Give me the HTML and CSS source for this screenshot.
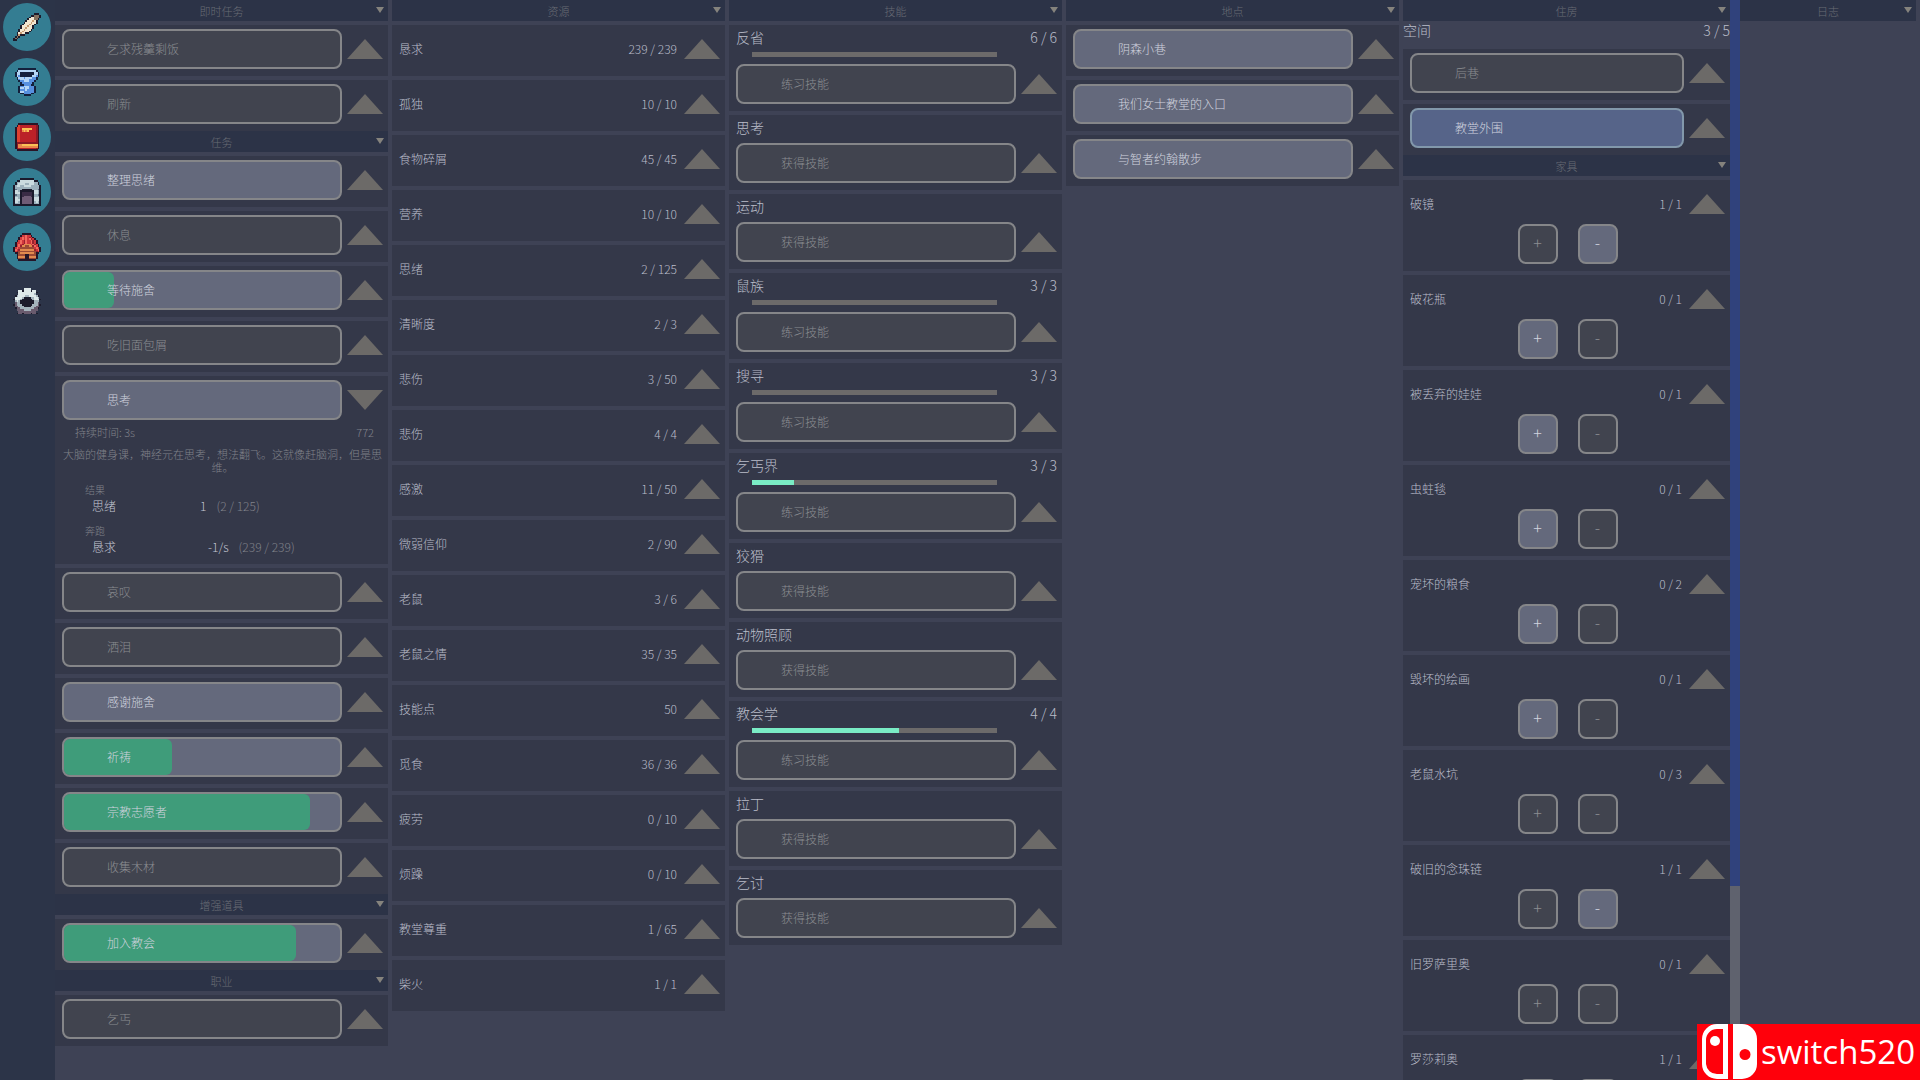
FILE: index.html
```html
<!DOCTYPE html>
<html lang="zh-CN">
<head>
    <meta charset="UTF-8">
    <meta name="viewport" content="width=device-width, initial-scale=1.0">
    <title>任务</title>
    <link rel="stylesheet" href="styles.css">
</head>
<body>
    <nav class="sidebar">
        <button class="nav-btn active" aria-label="任务">
            <svg class="nav-icon" viewBox="0 -0.5 16 16">
                <path stroke="#1d1b2b" d="M12 0h3M10 1h2M15 1h1M9 2h1M15 2h1M8 3h1M14 3h1M7 4h1M13 4h1M6 5h1M13 5h1M5 6h1M12 6h1M4 7h1M11 7h1M4 8h1M11 8h1M3 9h1M10 9h1M3 10h1M9 10h1M2 11h1M7 11h2M2 12h1M4 12h3M1 13h1M3 13h1M0 14h1M2 14h1M0 15h2"/>
                <path stroke="#857260" d="M12 1h3M12 2h3M12 3h2M2 13h1M1 14h1"/>
                <path stroke="#f3e6d0" d="M10 2h2M9 3h3M8 4h3M12 4h1M7 5h3M11 5h2M6 6h3M10 6h2M5 7h3M9 7h2M5 8h2M8 8h3M4 9h2M7 9h3M4 10h1M6 10h3M3 11h1M5 11h2"/>
                <path stroke="#c69a72" d="M11 4h1M10 5h1M9 6h1M8 7h1M7 8h1M6 9h1M5 10h1M4 11h1M3 12h1"/>
            </svg>
        </button>
        <button class="nav-btn active" aria-label="物品">
            <svg class="nav-icon" viewBox="0 -0.5 16 16">
                <path stroke="#14203c" d="M3 0h10M2 1h1M13 1h1M1 2h1M4 2h8M14 2h1M1 3h1M4 3h8M14 3h1M1 4h1M4 4h7M14 4h1M2 5h1M13 5h1M2 6h1M13 6h1M3 7h1M12 7h1M4 8h1M11 8h1M4 9h2M10 9h2M3 10h1M12 10h1M3 11h1M12 11h1M3 12h1M12 12h1M3 13h1M12 13h1M4 14h2M10 14h2M6 15h4"/>
                <path stroke="#b4d5f5" d="M3 1h10M2 2h2M12 2h2M2 3h2M12 3h2M2 4h1M11 4h2M3 5h3M7 5h4M4 6h5M6 7h3M6 10h3M4 11h2M7 11h2M7 12h1M4 13h2"/>
                <path stroke="#5790df" d="M3 4h1M13 4h1M6 5h1M11 5h2M3 6h1M9 6h4M4 7h2M9 7h3M5 8h6M6 9h4M4 10h2M9 10h3M6 11h1M9 11h3M4 12h3M8 12h4M6 13h6M6 14h4"/>
            </svg>
        </button>
        <button class="nav-btn active" aria-label="技能">
            <svg class="nav-icon" viewBox="0 -0.5 16 16">
                <path stroke="#2b1526" d="M3 0h11M2 1h1M14 1h1M1 2h1M14 2h1M1 3h1M14 3h1M1 4h1M14 4h1M1 5h1M14 5h1M1 6h1M14 6h1M1 7h1M14 7h1M1 8h1M14 8h1M1 9h1M14 9h1M1 10h1M14 10h1M1 11h1M14 11h1M1 12h1M14 12h1M1 13h1M14 13h1M1 14h1M14 14h1M2 15h12"/>
                <path stroke="#bb2128" d="M4 1h9M4 2h9M4 3h1M11 3h2M4 4h1M9 4h4M4 5h9M4 6h9M4 7h9M4 8h9M4 9h9M4 10h9M3 14h10"/>
                <path stroke="#8a1a26" d="M13 1h1M13 2h1M13 3h1M13 4h1M13 5h1M13 6h1M13 7h1M13 8h1M13 9h1M13 10h1M3 11h11M2 14h1M2 13h1M2 12h1M2 11h1M13 14h1"/>
                <path stroke="#df4030" d="M3 1h1M2 2h2M2 3h2M2 4h2M2 5h2M2 6h2M2 7h2M2 8h2M2 9h2M2 10h2"/>
                <path stroke="#f9c155" d="M5 3h6M6 4h1M8 4h1M5 12h9"/>
                <path stroke="#e88a4a" d="M5 4h1M7 4h1M3 12h2M3 13h11"/>
            </svg>
        </button>
        <button class="nav-btn active" aria-label="地点">
            <svg class="nav-icon" viewBox="0 -0.5 16 16">
                <path stroke="#1b1a2c" d="M4 0h8M2 1h2M12 1h2M1 2h1M14 2h1M1 3h1M14 3h1M0 4h1M15 4h1M0 5h1M15 5h1M0 6h1M5 6h6M15 6h1M0 7h1M4 7h8M15 7h1M0 8h1M4 8h1M11 8h1M15 8h1M0 9h1M4 9h1M11 9h1M15 9h1M0 10h1M4 10h1M11 10h1M15 10h1M0 11h1M4 11h1M11 11h1M15 11h1M0 12h1M4 12h1M11 12h1M15 12h1M0 13h1M4 13h1M11 13h1M15 13h1M0 14h1M4 14h1M11 14h1M15 14h1M0 15h16"/>
                <path stroke="#cbdbe0" d="M4 1h8M4 2h8M3 3h4M9 3h3M2 4h2M6 4h4M1 7h2M12 7h2M1 8h3M12 8h2M1 11h2M12 11h3M1 12h3M12 12h3M1 13h2M13 13h1"/>
                <path stroke="#9cb0bc" d="M2 2h2M12 2h2M2 3h1M7 3h2M12 3h2M1 4h1M4 4h2M10 4h5M1 5h14M2 6h3M11 6h3M3 7h1M14 7h1M14 8h1M2 9h2M12 9h2M1 10h3M12 10h3M3 11h1M3 13h1M12 13h1M14 13h1M1 14h3M12 14h3"/>
                <path stroke="#5c6d80" d="M1 6h1M14 6h1M1 9h1M14 9h1"/>
                <path stroke="#3a2c46" d="M5 8h6M5 9h6M5 10h1M10 10h1"/>
                <path stroke="#6f5c76" d="M6 10h4M5 11h6M5 12h6M5 13h6M5 14h6"/>
            </svg>
        </button>
        <button class="nav-btn active" aria-label="住房">
            <svg class="nav-icon" viewBox="0 -0.5 16 16">
                <path stroke="#251628" d="M5 0h5M4 1h1M10 1h1M3 2h1M11 2h1M3 3h1M12 3h1M2 4h1M13 4h1M1 5h1M13 5h1M1 6h1M14 6h1M1 7h1M14 7h1M0 8h1M15 8h1M0 9h1M15 9h1M0 10h1M15 10h1M1 11h2M13 11h2M2 12h1M7 12h2M13 12h1M2 13h1M7 13h2M13 13h1M2 14h1M7 14h2M13 14h1M3 15h10"/>
                <path stroke="#cf373c" d="M5 1h5M4 2h7M4 3h8M3 4h10M2 5h11M2 6h12M2 7h3M11 7h3M1 8h3M12 8h3M1 9h3M12 9h3M1 10h2M13 10h2"/>
                <path stroke="#f26a5e" d="M7 1h1M5 2h1M7 2h1M5 3h1M7 3h1M9 3h1M4 4h1M7 4h1M10 4h1M4 5h1M7 5h1M10 5h1M3 6h1M11 6h1M3 7h1M12 7h1M2 8h1M13 8h1M1 9h1M14 9h1"/>
                <path stroke="#98222f" d="M9 2h1M10 3h1M6 4h1M11 4h1M6 5h1M11 5h1M5 6h1M12 6h1M4 7h1M11 7h1M3 9h1M12 9h1M2 10h1M13 10h1"/>
                <path stroke="#e28a4e" d="M6 6h4M5 7h2M9 7h2M4 9h8M4 11h8M3 13h4M9 13h4"/>
                <path stroke="#9c4a35" d="M7 7h2M4 8h8M3 10h10M3 11h1M12 11h1M3 12h4M9 12h4M3 14h4M9 14h4"/>
            </svg>
        </button>
        <button class="nav-btn" aria-label="设置">
            <svg class="nav-icon" viewBox="0 -0.5 16 16">
                <path stroke="#1d1c2c" d="M5 1h1M10 1h1M2 2h1M13 2h1M1 4h1M14 4h1M6 5h4M0 6h1M5 6h6M15 6h1M4 7h8M4 8h8M5 9h6M0 9h1M15 9h1M6 10h4M1 11h1M14 11h1M2 14h1M5 14h1M10 14h1M13 14h1"/>
                <path stroke="#dfe9e9" d="M6 0h4M3 1h2M6 1h4M11 1h2M3 2h10M3 3h9M3 4h4M9 4h4M1 5h4M12 5h2M1 6h3M12 6h3M2 7h1"/>
                <path stroke="#a5b4bd" d="M12 3h1M2 4h1M7 4h2M13 4h1M5 5h1M10 5h2M14 5h1M4 6h1M11 6h1M1 7h1M3 7h1M12 7h3M2 8h2M12 8h2M2 9h3M11 9h3M3 10h3M10 10h3M4 11h8M6 12h4"/>
                <path stroke="#695b6e" d="M1 8h1M14 8h1M1 9h1M14 9h1M1 10h2M13 10h2M2 11h2M12 11h2M2 12h4M10 12h4M3 13h10M3 14h2M6 14h4M11 14h2"/>
            </svg>
        </button>
    </nav>
    <main class="columns">
        <section class="column">
            <h2 class="column-header">即时任务<button class="collapse" aria-label="折叠"></button></h2>
            <div class="card row"><button class="action" disabled><span>乞求残羹剩饭</span></button><button class="toggle" aria-label="展开"></button></div>
            <div class="card row"><button class="action" disabled><span>刷新</span></button><button class="toggle" aria-label="展开"></button></div>
            <h2 class="column-header">任务<button class="collapse" aria-label="折叠"></button></h2>
            <div class="card row"><button class="action"><span>整理思绪</span></button><button class="toggle" aria-label="展开"></button></div>
            <div class="card row"><button class="action" disabled><span>休息</span></button><button class="toggle" aria-label="展开"></button></div>
            <div class="card row"><button class="action"><i class="fill" style="width: 18%"></i><span>等待施舍</span></button><button class="toggle" aria-label="展开"></button></div>
            <div class="card row"><button class="action" disabled><span>吃旧面包屑</span></button><button class="toggle" aria-label="展开"></button></div>
            <div class="card">
                <div class="row"><button class="action"><span>思考</span></button><button class="toggle open" aria-label="收起"></button></div>
                <div class="details">
                    <div class="duration"><span>持续时间: 3s</span><span>772</span></div>
                    <p class="description">大脑的健身课，神经元在思考，想法翻飞。这就像赶脑洞，但是思维。</p>
                    <h3 class="effect-title">结果</h3>
                    <div class="effect"><span class="effect-name">思绪</span><span>1</span><span class="limit">(2 / 125)</span></div>
                    <h3 class="effect-title">奔跑</h3>
                    <div class="effect rate"><span class="effect-name">恳求</span><span>-1/s</span><span class="limit">(239 / 239)</span></div>
                </div>
            </div>
            <div class="card row"><button class="action" disabled><span>哀叹</span></button><button class="toggle" aria-label="展开"></button></div>
            <div class="card row"><button class="action" disabled><span>洒泪</span></button><button class="toggle" aria-label="展开"></button></div>
            <div class="card row"><button class="action"><span>感谢施舍</span></button><button class="toggle" aria-label="展开"></button></div>
            <div class="card row"><button class="action"><i class="fill" style="width: 39%"></i><span>祈祷</span></button><button class="toggle" aria-label="展开"></button></div>
            <div class="card row"><button class="action"><i class="fill" style="width: 89%"></i><span>宗教志愿者</span></button><button class="toggle" aria-label="展开"></button></div>
            <div class="card row"><button class="action" disabled><span>收集木材</span></button><button class="toggle" aria-label="展开"></button></div>
            <h2 class="column-header">增强道具<button class="collapse" aria-label="折叠"></button></h2>
            <div class="card row"><button class="action"><i class="fill" style="width: 84%"></i><span>加入教会</span></button><button class="toggle" aria-label="展开"></button></div>
            <h2 class="column-header">职业<button class="collapse" aria-label="折叠"></button></h2>
            <div class="card row"><button class="action" disabled><span>乞丐</span></button><button class="toggle" aria-label="展开"></button></div>
        </section>

        <section class="column">
            <h2 class="column-header">资源<button class="collapse" aria-label="折叠"></button></h2>
            <div class="card row"><span class="name">恳求</span><span>239 / 239</span><button class="toggle" aria-label="展开"></button></div>
            <div class="card row"><span class="name">孤独</span><span>10 / 10</span><button class="toggle" aria-label="展开"></button></div>
            <div class="card row"><span class="name">食物碎屑</span><span>45 / 45</span><button class="toggle" aria-label="展开"></button></div>
            <div class="card row"><span class="name">营养</span><span>10 / 10</span><button class="toggle" aria-label="展开"></button></div>
            <div class="card row"><span class="name">思绪</span><span>2 / 125</span><button class="toggle" aria-label="展开"></button></div>
            <div class="card row"><span class="name">清晰度</span><span>2 / 3</span><button class="toggle" aria-label="展开"></button></div>
            <div class="card row"><span class="name">悲伤</span><span>3 / 50</span><button class="toggle" aria-label="展开"></button></div>
            <div class="card row"><span class="name">悲伤</span><span>4 / 4</span><button class="toggle" aria-label="展开"></button></div>
            <div class="card row"><span class="name">感激</span><span>11 / 50</span><button class="toggle" aria-label="展开"></button></div>
            <div class="card row"><span class="name">微弱信仰</span><span>2 / 90</span><button class="toggle" aria-label="展开"></button></div>
            <div class="card row"><span class="name">老鼠</span><span>3 / 6</span><button class="toggle" aria-label="展开"></button></div>
            <div class="card row"><span class="name">老鼠之情</span><span>35 / 35</span><button class="toggle" aria-label="展开"></button></div>
            <div class="card row"><span class="name">技能点</span><span>50</span><button class="toggle" aria-label="展开"></button></div>
            <div class="card row"><span class="name">觅食</span><span>36 / 36</span><button class="toggle" aria-label="展开"></button></div>
            <div class="card row"><span class="name">疲劳</span><span>0 / 10</span><button class="toggle" aria-label="展开"></button></div>
            <div class="card row"><span class="name">烦躁</span><span>0 / 10</span><button class="toggle" aria-label="展开"></button></div>
            <div class="card row"><span class="name">教堂尊重</span><span>1 / 65</span><button class="toggle" aria-label="展开"></button></div>
            <div class="card row"><span class="name">柴火</span><span>1 / 1</span><button class="toggle" aria-label="展开"></button></div>
        </section>

        <section class="column">
            <h2 class="column-header">技能<button class="collapse" aria-label="折叠"></button></h2>
            <div class="card">
                <div class="skill-title"><span>反省</span><span>6 / 6</span></div>
                <div class="skill-bar"></div>
                <div class="row skill-row"><button class="action" disabled><span>练习技能</span></button><button class="toggle" aria-label="展开"></button></div>
            </div>
            <div class="card">
                <div class="skill-title"><span>思考</span></div>
                <div class="row skill-row"><button class="action" disabled><span>获得技能</span></button><button class="toggle" aria-label="展开"></button></div>
            </div>
            <div class="card">
                <div class="skill-title"><span>运动</span></div>
                <div class="row skill-row"><button class="action" disabled><span>获得技能</span></button><button class="toggle" aria-label="展开"></button></div>
            </div>
            <div class="card">
                <div class="skill-title"><span>鼠族</span><span>3 / 3</span></div>
                <div class="skill-bar"></div>
                <div class="row skill-row"><button class="action" disabled><span>练习技能</span></button><button class="toggle" aria-label="展开"></button></div>
            </div>
            <div class="card">
                <div class="skill-title"><span>搜寻</span><span>3 / 3</span></div>
                <div class="skill-bar"></div>
                <div class="row skill-row"><button class="action" disabled><span>练习技能</span></button><button class="toggle" aria-label="展开"></button></div>
            </div>
            <div class="card">
                <div class="skill-title"><span>乞丐界</span><span>3 / 3</span></div>
                <div class="skill-bar"><div class="skill-progress" style="width: 17%"></div></div>
                <div class="row skill-row"><button class="action" disabled><span>练习技能</span></button><button class="toggle" aria-label="展开"></button></div>
            </div>
            <div class="card">
                <div class="skill-title"><span>狡猾</span></div>
                <div class="row skill-row"><button class="action" disabled><span>获得技能</span></button><button class="toggle" aria-label="展开"></button></div>
            </div>
            <div class="card">
                <div class="skill-title"><span>动物照顾</span></div>
                <div class="row skill-row"><button class="action" disabled><span>获得技能</span></button><button class="toggle" aria-label="展开"></button></div>
            </div>
            <div class="card">
                <div class="skill-title"><span>教会学</span><span>4 / 4</span></div>
                <div class="skill-bar"><div class="skill-progress" style="width: 60%"></div></div>
                <div class="row skill-row"><button class="action" disabled><span>练习技能</span></button><button class="toggle" aria-label="展开"></button></div>
            </div>
            <div class="card">
                <div class="skill-title"><span>拉丁</span></div>
                <div class="row skill-row"><button class="action" disabled><span>获得技能</span></button><button class="toggle" aria-label="展开"></button></div>
            </div>
            <div class="card">
                <div class="skill-title"><span>乞讨</span></div>
                <div class="row skill-row"><button class="action" disabled><span>获得技能</span></button><button class="toggle" aria-label="展开"></button></div>
            </div>
        </section>

        <section class="column">
            <h2 class="column-header">地点<button class="collapse" aria-label="折叠"></button></h2>
            <div class="card row"><button class="action"><span>阴森小巷</span></button><button class="toggle" aria-label="展开"></button></div>
            <div class="card row"><button class="action"><span>我们女士教堂的入口</span></button><button class="toggle" aria-label="展开"></button></div>
            <div class="card row"><button class="action"><span>与智者约翰散步</span></button><button class="toggle" aria-label="展开"></button></div>
        </section>

        <section class="column housing">
            <div class="housing-list">
                <h2 class="column-header flush">住房<button class="collapse" aria-label="折叠"></button></h2>
                <div class="space"><span>空间</span><span>3 / 5</span></div>
                <div class="card row"><button class="action" disabled><span>后巷</span></button><button class="toggle" aria-label="展开"></button></div>
                <div class="card row"><button class="action current"><span>教堂外围</span></button><button class="toggle" aria-label="展开"></button></div>
                <h2 class="column-header">家具<button class="collapse" aria-label="折叠"></button></h2>
                <div class="card">
                    <div class="row"><span class="name">破镜</span><span>1 / 1</span><button class="toggle" aria-label="展开"></button></div>
                    <div class="amount"><button class="step" disabled>+</button><button class="step">-</button></div>
                </div>
                <div class="card">
                    <div class="row"><span class="name">破花瓶</span><span>0 / 1</span><button class="toggle" aria-label="展开"></button></div>
                    <div class="amount"><button class="step">+</button><button class="step" disabled>-</button></div>
                </div>
                <div class="card">
                    <div class="row"><span class="name">被丢弃的娃娃</span><span>0 / 1</span><button class="toggle" aria-label="展开"></button></div>
                    <div class="amount"><button class="step">+</button><button class="step" disabled>-</button></div>
                </div>
                <div class="card">
                    <div class="row"><span class="name">虫蛀毯</span><span>0 / 1</span><button class="toggle" aria-label="展开"></button></div>
                    <div class="amount"><button class="step">+</button><button class="step" disabled>-</button></div>
                </div>
                <div class="card">
                    <div class="row"><span class="name">宠坏的粮食</span><span>0 / 2</span><button class="toggle" aria-label="展开"></button></div>
                    <div class="amount"><button class="step">+</button><button class="step" disabled>-</button></div>
                </div>
                <div class="card">
                    <div class="row"><span class="name">毁坏的绘画</span><span>0 / 1</span><button class="toggle" aria-label="展开"></button></div>
                    <div class="amount"><button class="step">+</button><button class="step" disabled>-</button></div>
                </div>
                <div class="card">
                    <div class="row"><span class="name">老鼠水坑</span><span>0 / 3</span><button class="toggle" aria-label="展开"></button></div>
                    <div class="amount"><button class="step" disabled>+</button><button class="step" disabled>-</button></div>
                </div>
                <div class="card">
                    <div class="row"><span class="name">破旧的念珠链</span><span>1 / 1</span><button class="toggle" aria-label="展开"></button></div>
                    <div class="amount"><button class="step" disabled>+</button><button class="step">-</button></div>
                </div>
                <div class="card">
                    <div class="row"><span class="name">旧罗萨里奥</span><span>0 / 1</span><button class="toggle" aria-label="展开"></button></div>
                    <div class="amount"><button class="step" disabled>+</button><button class="step" disabled>-</button></div>
                </div>
                <div class="card">
                    <div class="row"><span class="name">罗莎莉奥</span><span>1 / 1</span><button class="toggle" aria-label="展开"></button></div>
                    <div class="amount"><button class="step" disabled>+</button><button class="step" disabled>-</button></div>
                </div>
            </div>
            <div class="scrollbar"><div class="thumb"></div></div>
        </section>

        <section class="column">
            <h2 class="column-header">日志<button class="collapse" aria-label="折叠"></button></h2>
        </section>
    </main>
    <div class="badge">
        <svg class="badge-logo" viewBox="0 0 56 56">
            <path fill="#fff" fill-rule="evenodd" d="M16 0h11v55H16A15 15 0 0 1 1 40V15A15 15 0 0 1 16 0zM16 5A11 11 0 0 0 5 16v24a11 11 0 0 0 11 10h6V5z"/>
            <circle cx="14" cy="17" r="5" fill="#fff"/>
            <path fill="#fff" fill-rule="evenodd" d="M32 0h9a15 15 0 0 1 15 15v25a15 15 0 0 1-15 15h-9zM44 25a5 5 0 1 0 0 11a5 5 0 1 0 0-11z"/>
        </svg>
        <span>switch520</span>
    </div>
</body>
</html>
```
FILE: styles.css
```css
* {
    box-sizing: border-box;
}

body {
    margin: 0;
    height: 100vh;
    display: flex;
    overflow: hidden;
    background-color: #3e4255;
    color: #babdc9;
    font-family: "Noto Sans CJK SC", sans-serif;
    font-size: 12px;
    font-weight: 300;
    line-height: 16px;
}

button {
    padding: 0;
    border: none;
    background: none;
    color: inherit;
    font: inherit;
    cursor: pointer;
}

.sidebar {
    flex: 0 0 55px;
    display: flex;
    flex-direction: column;
    gap: 7px;
    padding: 3px;
    background-color: #2c3448;
}

.nav-btn {
    display: flex;
    align-items: center;
    justify-content: center;
    width: 48px;
    height: 48px;
    border-radius: 50%;
}

.nav-btn.active {
    background-color: #347d92;
}

.nav-icon {
    width: 28px;
    height: 28px;
    shape-rendering: crispEdges;
}

.columns {
    flex: 1;
    display: grid;
    grid-template-columns: repeat(5, minmax(0, 337fr)) minmax(0, 180fr);
    min-width: 0;
}

.column {
    padding-right: 4px;
    min-height: 0;
}

.column-header {
    display: flex;
    align-items: center;
    justify-content: center;
    position: relative;
    height: 21px;
    margin: 0 0 4px;
    background-color: #2c3347;
    color: #696c75;
    font-size: 11px;
    font-weight: 300;
}

.card + .column-header {
    margin-top: -4px;
}

.column-header.flush {
    margin-bottom: 0;
}

.collapse {
    position: absolute;
    right: 4px;
    top: 7px;
    width: 8px;
    height: 6px;
    background-color: #85837d;
    clip-path: polygon(0 0, 100% 0, 50% 100%);
}

.card {
    margin-bottom: 4px;
    padding: 4px 5px 7px 7px;
    background-color: #343849;
}

.row {
    display: flex;
    align-items: center;
    gap: 5px;
    min-height: 40px;
}

.card.row {
    min-height: 51px;
}

.name {
    flex: 1;
}

.name + span {
    margin-right: 2px;
}

.action {
    flex: 1;
    position: relative;
    height: 40px;
    padding-left: 43px;
    border: 2px solid #858689;
    border-radius: 8px;
    background-color: #64697c;
    color: #d0d3df;
    text-align: left;
    overflow: hidden;
}

.action span {
    position: relative;
}

.action:disabled,
.step:disabled {
    background-color: #41444f;
    color: #8b8d91;
    cursor: default;
}

.action.current {
    border-color: #8298ab;
    background-color: #566489;
}

.fill {
    position: absolute;
    left: 0;
    top: 0;
    height: 100%;
    border-radius: 0 6px 6px 0;
    background-color: #3f9c7a;
}

.toggle {
    flex: 0 0 36px;
    height: 20px;
    background-color: #6c6a68;
    clip-path: polygon(50% 0, 100% 100%, 0 100%);
}

.toggle.open {
    clip-path: polygon(0 0, 100% 0, 50% 100%);
}

.details {
    height: 137px;
    color: #80828a;
    font-size: 11px;
}

.duration {
    display: flex;
    justify-content: space-between;
    padding: 4px 9px 0 13px;
}

.description {
    margin: 8px 0;
    line-height: 13px;
    text-align: center;
}

.effect-title {
    margin: 0 0 0 23px;
    font-size: 10px;
    font-weight: 300;
}

.effect {
    display: flex;
    gap: 10px;
    margin: 0 0 9px 30px;
    color: #c3c6d2;
    font-size: 12px;
}

.effect-name {
    width: 98px;
}

.effect.rate .effect-name {
    width: 106px;
}

.limit {
    color: #80828a;
}

.skill-title,
.space {
    display: flex;
    justify-content: space-between;
    font-size: 14px;
}

.skill-bar {
    height: 5px;
    margin: 7px 60px 7px 16px;
    background-color: #6c6a6a;
}

.skill-title + .skill-row {
    margin-top: 8px;
}

.skill-progress {
    height: 100%;
    background-color: #7aecc5;
}

.housing {
    display: flex;
    padding-right: 0;
}

.housing-list {
    flex: 1;
    height: 100vh;
    overflow-y: auto;
    scrollbar-width: none;
}

.space {
    height: 28px;
    padding-top: 1px;
}

.amount {
    display: flex;
    justify-content: center;
    gap: 20px;
}

.step {
    width: 40px;
    height: 40px;
    padding-bottom: 4px;
    border: 2px solid #858689;
    border-radius: 8px;
    background-color: #64697c;
    color: #d0d3df;
    font-size: 16px;
}

.scrollbar {
    flex: 0 0 10px;
    background-color: #5f626e;
}

.thumb {
    height: 82%;
    background-color: #30427c;
}

.badge {
    position: fixed;
    right: 0;
    bottom: 0;
    display: flex;
    align-items: center;
    gap: 4px;
    height: 56px;
    padding: 0 5px 0 4px;
    background-color: #ff000b;
    color: #fff;
    font-family: "Open Sans", sans-serif;
    font-size: 33px;
    font-weight: 400;
}

.badge-logo {
    width: 56px;
    height: 56px;
}
```
